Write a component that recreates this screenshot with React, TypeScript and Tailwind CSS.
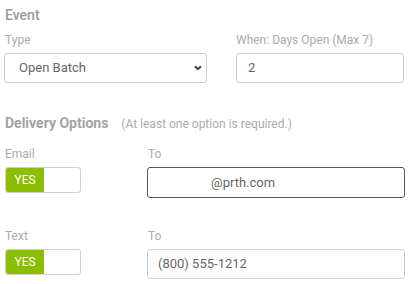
import React from "react";

function Toggle() {
  return (
    <div className="mt-[5px] flex h-[26px] w-[76px] overflow-hidden rounded-[3px] border border-[#d0d0d0] bg-white">
      <div className="flex w-[38px] items-center justify-center bg-[#8cbe00] text-[12px] text-white">
        YES
      </div>
    </div>
  );
}

export default function App() {
  return (
    <div className="h-[284px] w-[416px] bg-white pl-[4px] font-['Roboto',sans-serif]">
      <div className="pl-[1px] pt-[5px] text-[14px] font-medium leading-[20px] text-[#9a9a9a]">
        Event
      </div>

      {/* Event row */}
      <div className="mt-[7px] flex">
        <div className="w-[203px]">
          <div className="pl-[1px] text-[12px] leading-[16px] text-[#ababab]">Type</div>
          <div className="mt-[5px] flex h-[30px] items-center justify-between rounded-[3px] border border-[#cfcfcf] pl-[14px] pr-[4px] text-[13px] text-[#666]">
            <span>Open Batch</span>
            <svg width="8" height="6" viewBox="0 0 8 6">
              <path d="M1 1.2 L4 4.2 L7 1.2" fill="none" stroke="#444" strokeWidth="2" />
            </svg>
          </div>
        </div>
        <div className="ml-[29px] w-[168px]">
          <div className="text-[12px] leading-[16px] text-[#ababab]">When: Days Open (Max 7)</div>
          <div className="mt-[5px] flex h-[30px] items-center rounded-[3px] border border-[#cfcfcf] pl-[11px] text-[13px] text-[#666]">
            2
          </div>
        </div>
      </div>

      <div className="mt-[30px] flex items-baseline pl-[1px]">
        <span className="text-[14px] font-bold leading-[20px] text-[#a3a3a3]">Delivery Options</span>
        <span className="ml-[13px] text-[12px] text-[#ababab]">(At least one option is required.)</span>
      </div>

      {/* Email row */}
      <div className="mt-[13px] flex">
        <div className="w-[143px] pl-[1px]">
          <div className="text-[12px] leading-[16px] text-[#ababab]">Email</div>
          <Toggle />
        </div>
        <div className="w-[258px]">
          <div className="pl-[1px] text-[12px] leading-[16px] text-[#ababab]">To</div>
          <div className="mt-[5px] flex h-[31px] items-center rounded-[3px] border border-[#555] pl-[63px] text-[13px] text-[#666]">
            @prth.com
          </div>
        </div>
      </div>

      {/* Text row */}
      <div className="mt-[30px] flex">
        <div className="w-[143px] pl-[1px]">
          <div className="text-[12px] leading-[16px] text-[#ababab]">Text</div>
          <Toggle />
        </div>
        <div className="w-[258px]">
          <div className="pl-[1px] text-[12px] leading-[16px] text-[#ababab]">To</div>
          <div className="mt-[5px] flex h-[30px] items-center rounded-[3px] border border-[#cfcfcf] pl-[10px] text-[13px] text-[#666]">
            (800) 555-1212
          </div>
        </div>
      </div>
    </div>
  );
}
